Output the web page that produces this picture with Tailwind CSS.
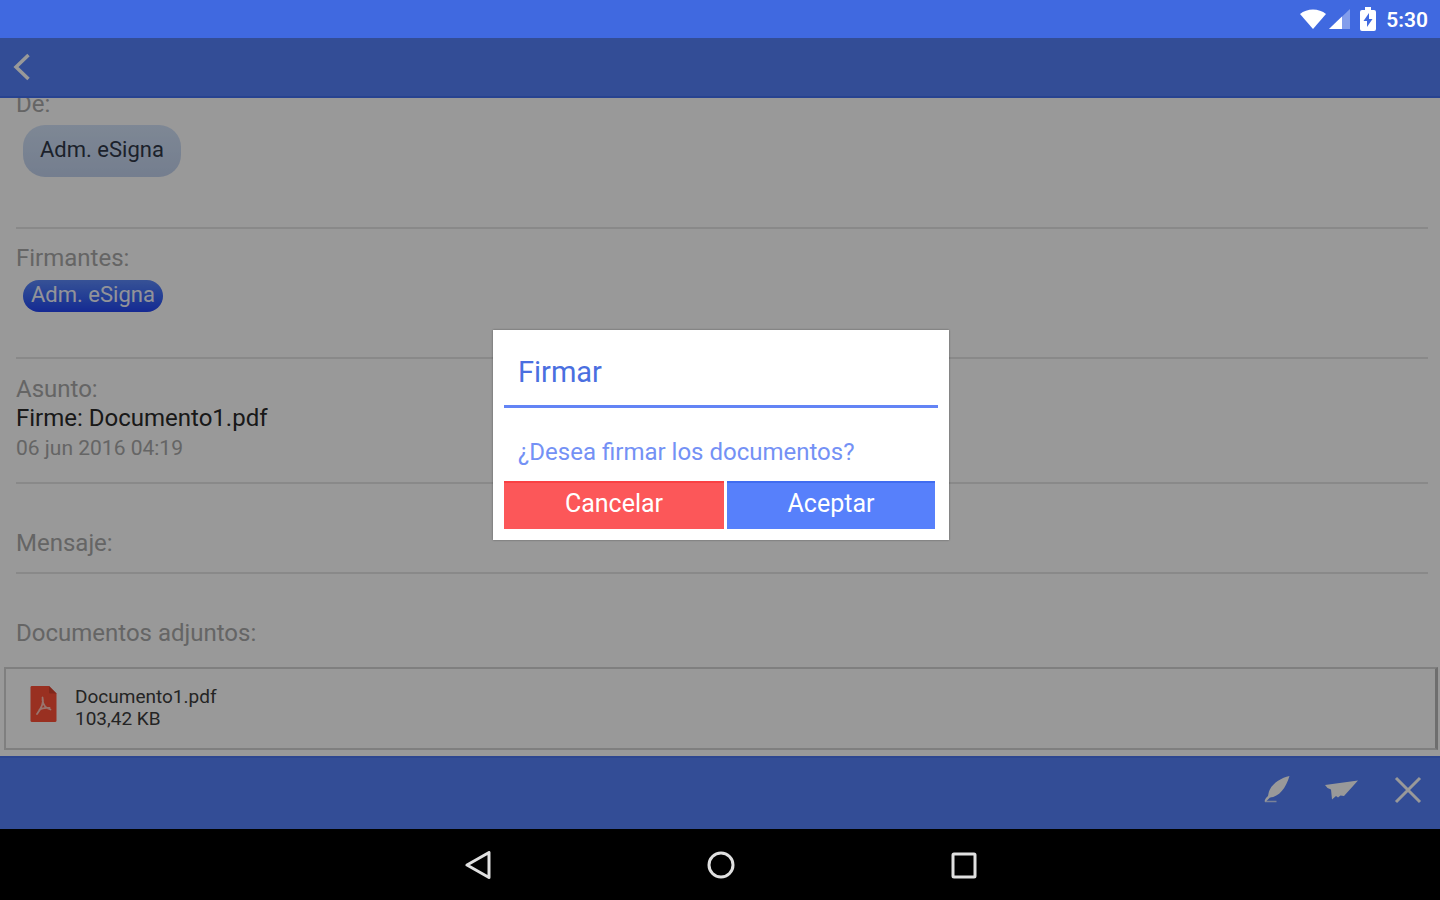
<!DOCTYPE html>
<html lang="es">
<head>
    <meta charset="UTF-8">
    <meta name="viewport" content="width=device-width, initial-scale=1.0">
    <title>eSigna - Firmar</title>
    <script src="https://cdn.jsdelivr.net/npm/@tailwindcss/browser@4"></script>
</head>
<body class="flex h-screen flex-col overflow-hidden bg-black font-['Roboto',sans-serif]">

    <!-- Barra de estado -->
    <div class="flex h-[38px] shrink-0 items-center justify-end bg-[#4069e0] pr-3 text-white">
        <svg class="h-5 w-[26px]" viewBox="0 0 26 20" fill="currentColor" aria-hidden="true"><path d="M0 5C7-1 19-1 26 5L13 20z"/></svg>
        <svg class="ml-[3px] h-5 w-[21px]" viewBox="0 0 21 20" aria-hidden="true">
            <path d="M0 20L21 0V20z" fill="#fff" fill-opacity=".35"/>
            <path d="M0 20L13 7.600V20z" fill="#fff"/>
        </svg>
        <svg class="ml-[10px] h-6 w-4" viewBox="0 0 16 24" aria-hidden="true">
            <path d="M5 0h6v3h3q2 0 2 2v17q0 2-2 2H2q-2 0-2-2V5q0-2 2-2h3z" fill="#fff"/>
            <path d="M9 6L3.500 14H7v6l5.500-8H9z" fill="#4069e0"/>
        </svg>
        <span class="ml-[10px] pt-[2px] text-[21px] leading-7 font-semibold">5:30</span>
    </div>

    <div class="relative flex min-h-0 flex-1 flex-col bg-white">
        <header class="flex h-[60px] shrink-0 items-center border-b-2 border-[#4470f0] bg-[#5580fa] px-3">
            <button type="button" aria-label="Volver" class="text-white">
                <svg class="h-7 w-5" viewBox="0 0 20 28" fill="none" stroke="currentColor" stroke-width="3.500" aria-hidden="true"><path d="M16.500 2L4 14l12.500 12"/></svg>
            </button>
        </header>

        <!-- Detalle de la petición -->
        <main class="min-h-0 flex-1 overflow-hidden">
            <div class="-mt-2 text-2xl leading-7 text-[#a8a8a8]">
                <section class="mr-3 ml-4 border-b-2 border-[#e4e4e4] pb-[50px]">
                    <h2>De:</h2>
                    <span class="mt-[7px] ml-[7px] flex h-[52px] w-fit items-center rounded-[22px] bg-linear-to-b from-[#d2e2f8] to-[#c2d2ee] px-[17px] pb-[2px] text-[22px] text-[#303848]">Adm. eSigna</span>
                </section>
                <section class="mr-3 ml-4 border-b-2 border-[#e4e4e4] pt-[15px] pb-[45px]">
                    <h2>Firmantes:</h2>
                    <span class="mt-2 ml-[7px] flex h-8 w-fit items-center rounded-full bg-linear-to-b from-[#5c88fa] to-[#2444f4] px-2 pb-[2px] text-[22px] text-[#f4f6ff]">Adm. eSigna</span>
                </section>
                <section class="mr-3 ml-4 border-b-2 border-[#e4e4e4] pt-4 pb-[19px]">
                    <h2>Asunto:</h2>
                    <p class="leading-[30px] text-[#2a2a2a]">Firme: Documento1.pdf</p>
                    <p class="text-[21px] leading-[30px]">06 jun 2016 04:19</p>
                </section>
                <section class="mr-3 ml-4 border-b-2 border-[#e4e4e4] pt-[45px] pb-[15px]">
                    <h2>Mensaje:</h2>
                </section>
                <section class="pt-[45px]">
                    <h2 class="ml-4">Documentos adjuntos:</h2>
                    <a href="#" class="mt-5 mr-[2px] ml-1 flex gap-[18px] border-2 border-r-[3px] border-[#d4d4d4] border-r-[#b8b8b8] px-6 pt-[17px] pb-[18px] text-[19px] leading-[22px] text-[#3c3c3c]">
                        <svg class="h-9 w-[27px]" viewBox="0 0 27 36" aria-hidden="true">
                            <path d="M1.500 0H19l7.500 7.500v27q0 1.500-1.500 1.500H2q-1.500 0-1.500-1.500V1.500q0-1.500 1-1.500z" fill="#ff5038"/>
                            <path d="M19 0l7.500 7.500H20q-1 0-1-1z" fill="#d8432e"/>
                            <path d="M12.500 11.500c1.500 4.500-1 10.500-5.500 16.500M12.500 14c.5 4.500 2.500 8 8 9.500M9.500 23.500c2.500-1.500 6-2 10-1.500" fill="none" stroke="#ffc4b8" stroke-width="1.800" stroke-linecap="round"/>
                        </svg>
                        <span>Documento1.pdf<br>103,42 KB</span>
                    </a>
                </section>
            </div>
        </main>

        <footer class="flex h-[73px] shrink-0 items-start justify-end border-t-2 border-[#4c76f0] bg-[#5580fa] pt-[18px] pr-[18px] text-white">
            <button type="button" aria-label="Firmar">
                <svg class="h-7 w-7" viewBox="0 0 28 28" fill="none" aria-hidden="true">
                    <path d="M27.500 0C18 2 8 9 6.500 17.500L6 20c-2 1.500-3 3.500-3.500 5.500h1.500L8 21.500C17 21 24 12 27.500 0z" fill="currentColor"/>
                    <path d="M3 25.500h11.500" stroke="currentColor" stroke-opacity=".7" stroke-width="1.500"/>
                </svg>
            </button>
            <button type="button" aria-label="Enviar" class="ml-[34px]">
                <svg class="h-7 w-[34px]" viewBox="0 0 34 28" fill="currentColor" aria-hidden="true"><path d="M34 4.500L1 9l2.500 3L7 13.500l1 10 4-3.500 2 1.500 2.500-2 3.500.5z"/></svg>
            </button>
            <button type="button" aria-label="Cerrar" class="ml-9">
                <svg class="h-7 w-7" viewBox="0 0 28 28" fill="none" stroke="currentColor" stroke-width="3" aria-hidden="true"><path d="M2 2l24 24M26 2L2 26"/></svg>
            </button>
        </footer>

        <!-- Diálogo de confirmación -->
        <div class="absolute inset-0 flex items-center justify-center bg-black/40 pt-[3px] pl-[2px]">
            <div role="dialog" aria-modal="true" aria-labelledby="titulo" class="w-[456px] max-w-full bg-white px-[11px] pb-[11px] shadow-[0_0_2px_rgba(0,0,0,0.4)]">
                <h1 id="titulo" class="border-b-3 border-[#6384f5] px-[14px] pt-[26px] pb-[17px] text-[29px] leading-8 text-[#4a6fe0]">Firmar</h1>
                <p class="px-[14px] pt-[30px] pb-[15px] text-2xl leading-7 text-[#7491f5]">¿Desea firmar los documentos?</p>
                <div class="mr-[3px] flex gap-[3px] text-[25px] leading-8 text-white">
                    <button type="button" class="h-12 w-[220px] border-t-2 border-[#fa4043] bg-[#fc5759] pb-[5px]">Cancelar</button>
                    <button type="button" class="h-12 flex-1 border-t-2 border-[#406cf0] bg-[#5780fb] pb-[5px]">Aceptar</button>
                </div>
            </div>
        </div>
    </div>

    <!-- Barra de navegación -->
    <nav class="flex h-[71px] shrink-0 items-center justify-center gap-[215px] bg-black pl-[2px] text-[#e0e0e0]">
        <button type="button" aria-label="Atrás">
            <svg class="h-7 w-7" viewBox="0 0 28 28" fill="none" stroke="currentColor" stroke-width="3" stroke-linejoin="round" aria-hidden="true"><path d="M25 1.500v25L3 14z"/></svg>
        </button>
        <button type="button" aria-label="Inicio">
            <svg class="h-7 w-7" viewBox="0 0 28 28" fill="none" stroke="currentColor" stroke-width="3" aria-hidden="true"><circle cx="14" cy="14" r="12"/></svg>
        </button>
        <button type="button" aria-label="Recientes">
            <svg class="h-7 w-7" viewBox="0 0 28 28" fill="none" stroke="currentColor" stroke-width="3" aria-hidden="true"><rect x="3" y="3" width="22" height="23" rx="1"/></svg>
        </button>
    </nav>
</body>
</html>
